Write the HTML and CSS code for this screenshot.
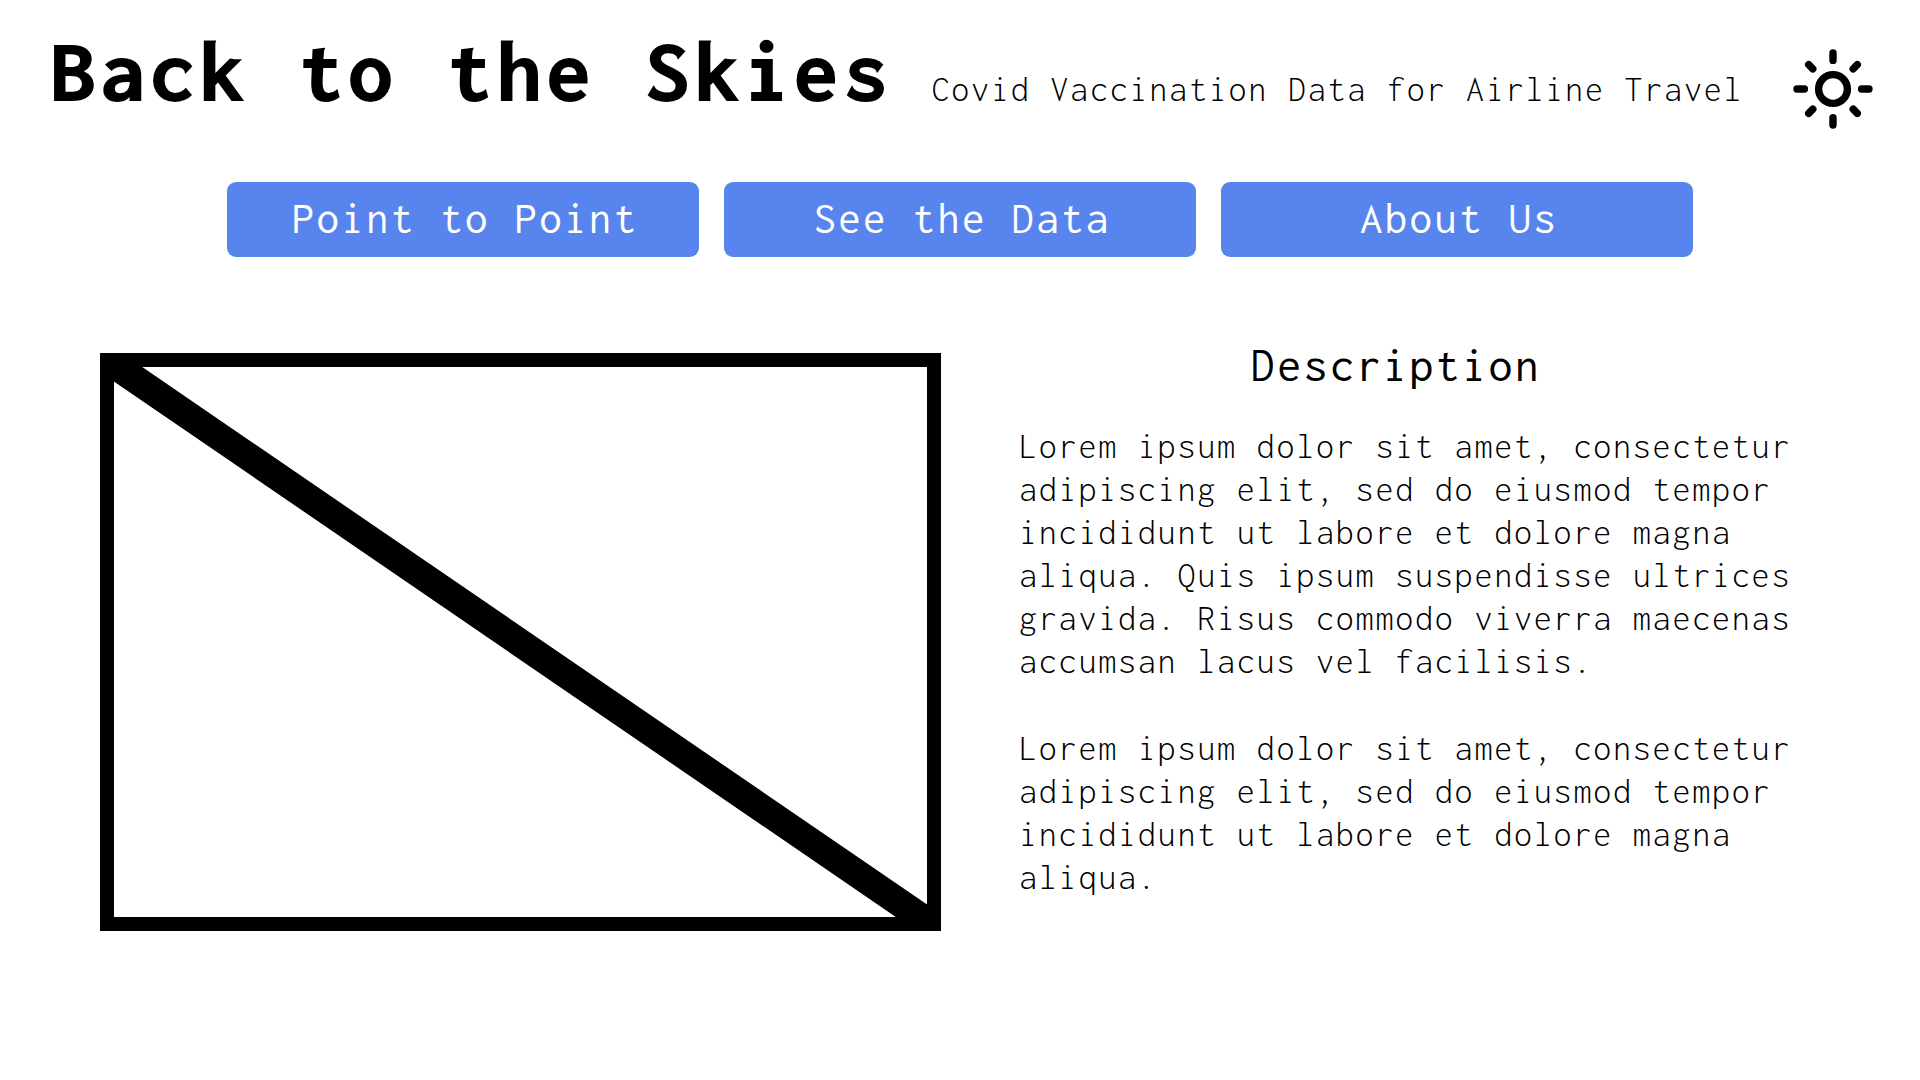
FILE: index.html
```html
<!DOCTYPE html>
<html lang="en">
<head>
  <meta charset="utf-8">
  <meta name="viewport" content="width=device-width, initial-scale=1">
  <title>Back to the Skies</title>
  <link rel="stylesheet" href="styles.css">
</head>
<body>
  <header class="header">
    <div class="brand">
      <h1 class="title">Back to the Skies</h1>
      <p class="tagline">Covid Vaccination Data for Airline Travel</p>
    </div>
    <button class="theme-toggle" type="button" aria-label="Toggle theme">
      <svg class="sun" viewBox="0 0 80 80" fill="none" stroke="currentColor" stroke-width="7.4" stroke-linecap="round" aria-hidden="true">
        <circle cx="40" cy="40" r="14.4"/>
        <path d="M40 4v7.4M40 68.6V76M4 40h7.4M68.6 40H76M15.7 15.7l4.1 4.1M60.2 60.2l4.1 4.1M15.7 64.3l4.1-4.1M60.2 19.8l4.1-4.1"/>
      </svg>
    </button>
  </header>
  <nav class="nav">
    <button class="nav-button" type="button">Point to Point</button>
    <button class="nav-button" type="button">See the Data</button>
    <button class="nav-button" type="button">About Us</button>
  </nav>
  <main class="content">
    <svg class="placeholder" viewBox="0 0 841 578" role="img" aria-label="Image placeholder">
      <rect x="7" y="7" width="827" height="564" fill="#fff" stroke="#000" stroke-width="14"/>
      <path d="M0 2L841 578" stroke="#000" stroke-width="28"/>
    </svg>
    <section class="description">
      <h2 class="description-title">Description</h2>
      <div class="description-text">
        <p>Lorem ipsum dolor sit amet, consectetur adipiscing elit, sed do eiusmod tempor incididunt ut labore et dolore magna aliqua. Quis ipsum suspendisse ultrices gravida. Risus commodo viverra maecenas accumsan lacus vel facilisis.</p>
        <p>Lorem ipsum dolor sit amet, consectetur adipiscing elit, sed do eiusmod tempor incididunt ut labore et dolore magna aliqua.</p>
      </div>
    </section>
  </main>
</body>
</html>
```
FILE: styles.css
```css
* {
  box-sizing: border-box;
}

body {
  margin: 0;
  background: #fff;
  color: #000;
  font-family: Inconsolata, "Liberation Mono", monospace;
}

h1,
h2,
p,
button {
  margin: 0;
  font-weight: 400;
  letter-spacing: 0.05em;
}

button {
  border: 0;
  font-family: inherit;
  cursor: pointer;
}

.header {
  display: flex;
  align-items: flex-start;
  justify-content: space-between;
  padding: 19px 47px 0 51px;
}

.brand {
  display: flex;
  flex-wrap: wrap;
  align-items: baseline;
  column-gap: 39px;
}

.title {
  font-size: 90px;
  font-weight: 800;
  line-height: 104px;
}

.tagline {
  font-size: 36px;
  font-weight: 300;
  line-height: 43px;
}

.theme-toggle {
  flex: none;
  margin-top: 30px;
  padding: 0;
  background: none;
  color: inherit;
}

.sun {
  display: block;
  width: 80px;
  height: 80px;
}

.nav {
  display: grid;
  grid-template-columns: repeat(3, 1fr);
  gap: 25px;
  padding: 53px 227px 0;
}

.nav-button {
  padding: 11px 0 14px 4px;
  border-radius: 9px;
  background: #5784ed;
  color: #fff;
  font-size: 45px;
  line-height: 50px;
}

.content {
  display: grid;
  grid-template-columns: 841fr 836fr;
  align-items: start;
  gap: 36px;
  padding: 84px 107px 60px 100px;
}

.placeholder {
  display: block;
  width: 100%;
  margin-top: 12px;
}

.description-title {
  padding-left: 2px;
  font-size: 48px;
  line-height: 48px;
  text-align: center;
}

.description-text {
  display: grid;
  gap: 44px;
  margin-top: 36px;
  padding-left: 42px;
}

.description-text p {
  font-size: 36px;
  font-weight: 300;
  line-height: 43px;
}
```
